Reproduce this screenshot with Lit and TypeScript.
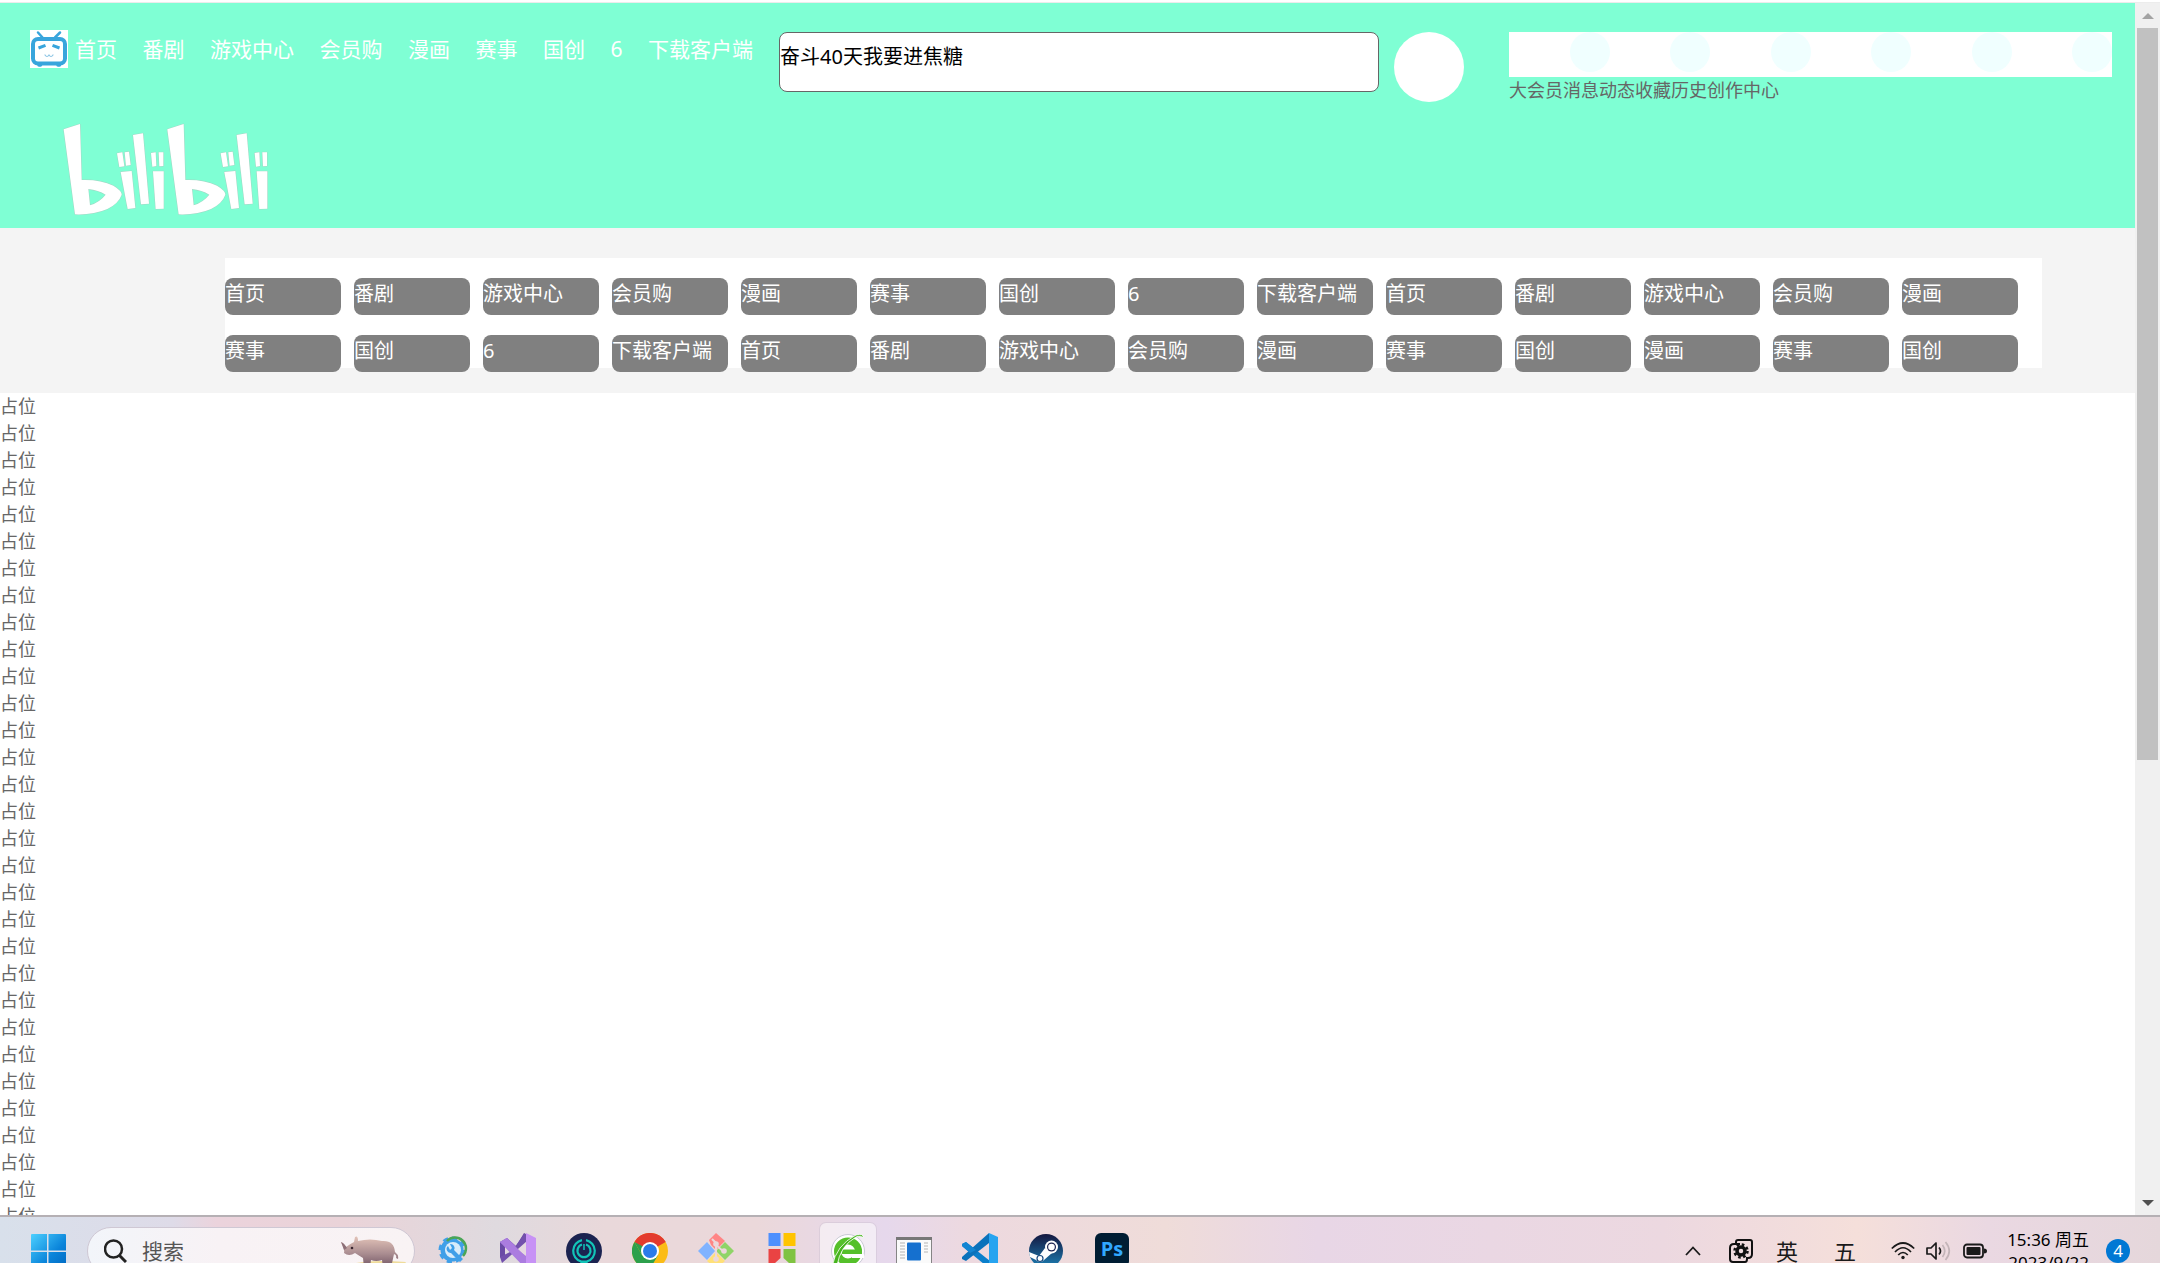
import { LitElement, html, svg, css } from "lit";
import { customElement } from "lit/decorators.js";

const NAV = ["首页", "番剧", "游戏中心", "会员购", "漫画", "赛事", "国创", "6", "下载客户端"];
const CHANNELS = [
  ...NAV, "首页", "番剧", "游戏中心", "会员购", "漫画",
  "赛事", "国创", "6", "下载客户端", "首页", "番剧", "游戏中心",
  "会员购", "漫画", "赛事", "国创", "漫画", "赛事", "国创",
];
const TOOLS = ["大会员", "消息", "动态", "收藏", "历史", "创作中心"];
const FILLER = Array.from({ length: 31 }, () => "占位");

const FONT = css`"Noto Sans", "Noto Sans CJK SC", sans-serif`;

const halfLogo = svg`
  <path fill-rule="evenodd" d="M191 388L240 372L245 540Q300 538 340 557Q365 572 365 584Q356 610 322 627Q280 645 225 643ZM265 567L270 616Q300 606 317 584Q295 570 265 567Z"/>
  <path d="M351 460L367 457L373 499L358 501ZM374 457L387 455L392 495L378 497Z"/>
  <path d="M362 516L395 513L406 624L383 627Z"/>
  <path d="M399 405L429 400L447 611L423 613Z"/>
  <path d="M453 459L467 457L469 498L457 500ZM476 457L490 457L490 498L478 499Z"/>
  <path d="M459 514L491 514L491 626L467 627Z"/>`;

@customElement("site-header")
export class SiteHeader extends LitElement {
  static styles = css`
    :host { display: block; background: #7fffd4; font-family: ${FONT}; padding: 27px 23px 13px 30px; }
    .row { display: flex; align-items: flex-start; }
    .tv { flex: none; width: 38px; height: 38px; display: block; margin-right: 7px; }
    nav { flex: 0 1 678px; display: flex; justify-content: space-between; }
    nav a { color: #fff; text-decoration: none; font-size: 21px; line-height: 38px; white-space: nowrap; }
    .tools { flex: 1 1 0; display: flex; align-items: flex-start; margin: 2px 0 0 26px; min-width: 0; }
    input {
      flex: 1 1 600px; min-width: 0; box-sizing: border-box; height: 60px; margin: 0;
      padding: 0 0 14px 0; border: 1px solid #666; border-radius: 8px; background: #fff;
      color: #000; font-family: ${FONT}; font-size: 20px; outline: none;
    }
    .avatar { flex: none; width: 70px; height: 70px; border: 0; padding: 0; border-radius: 50%; background: #fff; margin: 0 45px 0 15px; }
    .panel { flex: 0 1 603px; color: #666; font-size: 18px; line-height: 27px; }
    .dots { display: grid; grid-template-columns: repeat(6, 1fr); justify-items: end; height: 45px; background: #fff; }
    .dot { width: 40px; height: 40px; border-radius: 50%; background: #f0ffff; }
    .labels { display: flex; }
    .labels a { color: inherit; text-decoration: none; white-space: nowrap; }
    .logo { display: block; width: 207px; height: 92px; margin: 19px 0 0 32px; }
  `;
  render() {
    return html`
      <div class="row">
        <svg class="tv" viewBox="0 0 38 38" aria-hidden="true">
          <rect width="38" height="38" fill="#fff"/>
          <g fill="none" stroke="#38a5dc" stroke-linecap="round">
            <path stroke-width="2.5" d="M8 2.500L12.500 7.500M30 2.500L25 7.500"/>
            <rect x="3" y="9" width="32" height="24.500" rx="5" stroke-width="4"/>
            <path stroke-width="3.500" d="M9 35h1.500M28 35h1.500"/>
            <path stroke-width="3" stroke-linecap="butt" d="M8.500 18l7-2.600M22.500 15.400l7 2.600"/>
            <path stroke-width="1.200" stroke="#8bc4e4" d="M15 25q2 3 4 0q2 3 4 0"/>
          </g>
        </svg>
        <nav>${NAV.map((t) => html`<a href="#">${t}</a>`)}</nav>
        <div class="tools">
          <input type="text" aria-label="搜索" .value=${"奋斗40天我要进焦糖"} />
          <button class="avatar" aria-label="头像"></button>
          <div class="panel">
            <div class="dots">${TOOLS.map(() => html`<span class="dot"></span>`)}</div>
            <div class="labels">${TOOLS.map((t) => html`<a href="#">${t}</a>`)}</div>
          </div>
        </div>
      </div>
      <svg class="logo" viewBox="186 369 621 276" role="img" aria-label="bilibili" fill="#fff"
        stroke="#a5d5c4" stroke-width="3" paint-order="stroke">
        <g>${halfLogo}</g><g transform="translate(311 0)">${halfLogo}</g>
      </svg>`;
  }
}

@customElement("channel-list")
export class ChannelList extends LitElement {
  static styles = css`
    :host { display: block; background: #f4f4f4; padding: 30px 93px 25px 225px; font-family: ${FONT}; }
    .box { height: 90px; background: #fff; padding: 20px 24px 0 0; display: grid;
      grid-template-columns: repeat(14, 1fr); grid-auto-rows: 37px; gap: 20px 13px; align-content: start; }
    a { display: block; background: #808080; border-radius: 8px; color: #fff; text-decoration: none;
      font-size: 20px; line-height: 31px; white-space: nowrap; }
  `;
  render() {
    return html`<div class="box">${CHANNELS.map((t) => html`<a href="#">${t}</a>`)}</div>`;
  }
}

@customElement("scroll-rail")
export class ScrollRail extends LitElement {
  static styles = css`
    :host { display: flex; flex-direction: column; flex: none; width: 25px; background: #f0f0f0; }
    button { flex: none; height: 25px; padding: 0; border: 0; background: none; display: grid; place-items: center; }
    svg { width: 12px; height: 6px; display: block; }
    .track { flex: 1; padding: 0 2px; }
    .thumb { height: 63%; background: #c1c1c1; }
  `;
  render() {
    return html`
      <button aria-label="向上滚动"><svg viewBox="0 0 12 6"><path d="M0 6L6 0L12 6Z" fill="#a3a3a3"/></svg></button>
      <div class="track"><div class="thumb"></div></div>
      <button aria-label="向下滚动"><svg viewBox="0 0 12 6"><path d="M0 0L6 6L12 0Z" fill="#505050"/></svg></button>`;
  }
}

const APPS = [
  { name: "设置工具", art: svg`
    <circle cx="18" cy="17" r="9" fill="none" stroke="#3f9fe8" stroke-width="5"/>
    <circle cx="18" cy="17" r="11.500" fill="none" stroke="#3f9fe8" stroke-width="4" stroke-dasharray="5 4"/>
    <circle cx="19" cy="17" r="8" fill="#d8ecfa"/>
    <path d="M13 8a10 10 0 0 1 16 15" fill="none" stroke="#4aa556" stroke-width="2.500"/>
    <path d="M14 13a4 4 0 0 0 3 7l9 9l3-3l-9-9a4 4 0 0 0-4-6l2 4l-2 2Z" fill="#3f9fe8"/>` },
  { name: "Visual Studio", art: svg`
    <path d="M0 9L7 5L16 13L24 0L27 2V34L8 17L5 20V27L0 24Z" fill="#6b4aa6"/>
    <path d="M5 13V21L9 17Z" fill="#e5d8e0"/>
    <path d="M0 9L7 5L30 27L27 36L7 15Z" fill="#a878dd"/>
    <path d="M17 16L27 5V24Z" fill="#e5d8e0"/>
    <path d="M12 18L25 0L27 8L2 30L0 24Z" fill="#7350ad"/>
    <path d="M0 9L7 5L30 28L26 36Z" fill="#ab7ce0"/>
    <path d="M26 0L36 5V32L26 36Z" fill="#c792f5"/>` },
  { name: "安全中心", art: svg`
    <circle cx="18" cy="18" r="18" fill="#1b2350"/>
    <g fill="none" stroke="#12c4b8" stroke-width="2.200">
      <path d="M16 7.200A11 11 0 0 0 15 28.500M20 7.200A11 11 0 0 1 21 28.500"/>
      <path d="M16 11.500A6.500 6.500 0 1 0 20 11.500"/><path d="M18 11v6" stroke-width="1.500"/>
      <path d="M15 28.500h6l-3 4z" fill="#12c4b8"/>
    </g>` },
  { name: "Chrome", art: svg`
    <circle cx="18" cy="18" r="18" fill="#fbbc16"/>
    <path d="M18 18L2.400 9A18 18 0 0 1 33.600 9Z" fill="#e33b2e"/>
    <path d="M2.400 9A18 18 0 0 0 18 36L25.800 22.500L18 18L10.200 22.500Z" fill="#2da04c"/>
    <path d="M3 8.500A18 18 0 0 1 33.600 9H18L10 20Z" fill="#e33b2e"/>
    <path d="M2.400 9L10.200 22.500L14 15Z" fill="#2da04c"/>
    <circle cx="18" cy="18" r="9" fill="#fff"/><circle cx="18" cy="18" r="7" fill="#2a7bea"/>` },
  { name: "Git", art: svg`
    <path d="M18 0L27 8L18 17L13 12L11 7Z" fill="#ff8585"/>
    <path d="M9 9L17 18L9 27L0 18Z" fill="#80b3ff"/>
    <path d="M27 9L36 18L27 27L18 18Z" fill="#8fd467"/>
    <path d="M18 19L27 28L18 36L9 28Z" fill="#ffe078"/>
    <path d="M14 6L18 10V27M18 12L26 19" fill="none" stroke="#ebd8db" stroke-width="2"/>
    <g fill="#ebd8db"><circle cx="18" cy="11" r="2.800"/><circle cx="26" cy="18" r="2.800"/><circle cx="18" cy="26" r="2.800"/></g>` },
  { name: "应用商店", art: svg`
    <path d="M4.500 0H16.500V13H4.500Z" fill="#4d90fe"/><path d="M19.500 0H31.500V13H19.500Z" fill="#ffc400"/>
    <path d="M4.500 16H16.500V25L4.500 36Z" fill="#ea4343"/><path d="M19.500 16H31.500V36L19.500 25Z" fill="#80c342"/>` },
  { name: "浏览器", active: true, art: svg`
    <circle cx="18" cy="18" r="16.500" fill="#fff" stroke="#c9c9d4" stroke-width="1"/>
    <circle cx="18" cy="18.500" r="10.500" fill="none" stroke="#55c02a" stroke-width="7"/>
    <path d="M12 16.500H32V21H12Z" fill="#55c02a"/><path d="M22 21H34V25H22Z" fill="#fff"/>
    <path d="M2 34Q6 12 26 2Q34 0 33 5Q31 2 26 4Q10 13 7 33Z" fill="#47b41e" stroke="#fff" stroke-width=".8"/>` },
  { name: "窗口", art: svg`
    <rect x=".5" y="4.500" width="35" height="32" fill="#fafafa" stroke="#858585"/>
    <path d="M0 4H36V7H0Z" fill="#777"/><rect x="11" y="9.500" width="14" height="18" rx="1" fill="#1570cf"/>
    <path d="M4 10h5M4 13h5M4 16h5M4 19h5M4 22h5M4 25h5M28 10h4M28 13h4M28 16h4M28 19h4" stroke="#ccc" stroke-width="1.500"/>` },
  { name: "VS Code", art: svg`
    <path d="M0 11L4 9L28 28V36L0 13Z" fill="#0b7fcb"/>
    <path d="M0 24L27 0V10L4 28L0 26Z" fill="#0a72bb"/>
    <path d="M0 11L4 9L14 17L8 20L0 13Z" fill="#1285d2"/>
    <path d="M27 0L36 4V32L27 36Z" fill="#27a4f0"/>` },
  { name: "Steam", art: svg`
    <defs><linearGradient id="st" x1="0" y1="0" x2="0" y2="1"><stop offset="0" stop-color="#14173f"/><stop offset="1" stop-color="#1c7fb4"/></linearGradient></defs>
    <circle cx="18" cy="18" r="17" fill="url(#st)"/>
    <path d="M1 19L11 23L17 15L24 20L16 27A5 5 0 0 1 8 27L2 24Z" fill="#fff"/>
    <circle cx="23.500" cy="14" r="6.500" fill="#fff"/><circle cx="23.500" cy="14" r="4.500" fill="#1a2350"/><circle cx="23.500" cy="14" r="3.300" fill="#fff"/>
    <circle cx="12" cy="25.500" r="3" fill="none" stroke="#1b4b80" stroke-width="1.200"/>` },
  { name: "Photoshop", art: svg`
    <rect x="1" y="0" width="34" height="34" rx="6" fill="#001d33"/>
    <text x="18" y="23" text-anchor="middle" font-family="Open Sans, sans-serif" font-weight="700" font-size="20" fill="#31a8ff">Ps</text>` },
];

@customElement("task-bar")
export class TaskBar extends LitElement {
  static styles = css`
    :host {
      display: block; flex: none; height: 46px; overflow: hidden; border-top: 2px solid #b5b0b4; font-family: ${FONT};
      background: linear-gradient(90deg, #d8e0eb 0, #dedbe8 8%, #ebd3dc 10%, #ead3d8 16%, #dfdadf 23%, #e9d8da 28%,
        #ebd8da 35%, #e6d8ec 41%, #edd9df 45%, #efdcd9 54%, #e8d6e6 61%, #ecd8e0 77%, #f5dfda 86%, #ead8e2 92%, #e5d7db 100%);
    }
    .bar { height: 68px; display: flex; align-items: center; padding: 0 30px; }
    button { border: 0; padding: 0; margin: 0; background: none; display: grid; place-items: center; }
    svg { display: block; }
    .start { flex: none; width: 36px; height: 36px; margin-right: 21px; }
    .search { flex: none; box-sizing: border-box; display: flex; align-items: center; width: 328px; height: 48px; padding: 0 6px 0 16px;
      border: 1px solid #cfc8d4; border-radius: 24px; background: linear-gradient(90deg, #f2f5fa, #f8f2f5 40%, #f9f3f4); }
    .search input { flex: 1; min-width: 0; border: 0; outline: 0; background: none; margin-left: 15px; padding: 0;
      font-family: ${FONT}; font-size: 21px; line-height: 30px; color: #555; }
    .search input::placeholder { color: #555; opacity: 1; }
    .apps { display: flex; margin-left: 4px; }
    .app { width: 66px; height: 56px; }
    .tile { width: 56px; height: 56px; display: grid; place-items: center; border-radius: 6px; }
    .tile.active { background: rgba(255, 255, 255, .5); box-shadow: 0 0 0 1px rgba(200, 190, 205, .4); }
    .tray { display: flex; align-items: center; margin-left: auto; color: #1a1a1a; }
    .chevron { width: 16px; margin-right: 28px; }
    .ime { width: 24px; margin-right: 22px; }
    .lang { width: 24px; font-family: ${FONT}; font-size: 22px; line-height: 30px; color: #1a1a1a; margin-right: 34px; }
    .status { display: flex; align-items: center; gap: 11px; margin-right: 20px; }
    time { text-align: right; font-size: 17px; line-height: 23px; color: #000; margin-right: 17px; white-space: nowrap; }
    .badge { width: 24px; height: 24px; border-radius: 50%; background: #0078d4; color: #fff; font-family: ${FONT}; font-size: 17px; line-height: 24px; }
  `;
  render() {
    return html`<div class="bar">
      <button class="start" aria-label="开始">
        <svg width="36" height="36" viewBox="0 0 36 36">
          <defs><linearGradient id="w" x1="0" y1="0" x2="1" y2="1"><stop offset="0" stop-color="#4cd0ff"/><stop offset=".6" stop-color="#0a84da"/><stop offset="1" stop-color="#0067c0"/></linearGradient></defs>
          <path d="M2 1H17V17.500H1V2Q1 1 2 1ZM18.500 1H35Q36 1 36 2V17.500H18.500ZM1 19H17V36H1ZM18.500 19H36V36H18.500Z" fill="url(#w)"/>
        </svg>
      </button>
      <label class="search">
        <svg width="23" height="24" viewBox="0 0 23 24"><circle cx="9.500" cy="10" r="8.500" fill="none" stroke="#222" stroke-width="2.500"/><path d="M15.500 16.500L22 23" stroke="#222" stroke-width="3"/></svg>
        <input type="text" aria-label="搜索" placeholder="搜索" />
        <svg width="68" height="34" viewBox="0 0 68 34">
          <defs><linearGradient id="r" x1="0" y1="0" x2="0" y2="1"><stop offset="0" stop-color="#e3c3b8"/><stop offset=".55" stop-color="#a98c90"/><stop offset="1" stop-color="#6f5362"/></linearGradient></defs>
          <path d="M12 30Q30 25 66 28L62 34H10Z" fill="#efdc9a"/>
          <path d="M1 8Q4 9 6 13Q10 10 14 8L15 3Q18 1 18 7Q30 4 42 7Q54 6 55 18Q59 21 58 25L56 24Q57 21 54 20L51 34H43L42 26Q36 28 31 26L30 34H24L23 24Q18 21 15 19Q9 23 4 19Q5 15 1 8Z" fill="url(#r)"/>
          <circle cx="12" cy="14" r="1.300" fill="#3a2630"/><path d="M1 8Q4 9 7 14L4 16Z" fill="#8d7078"/>
        </svg>
      </label>
      <div class="apps">${APPS.map((a) => html`<button class="app" aria-label=${a.name}>
        <span class="tile ${a.active ? "active" : ""}"><svg width="36" height="36" viewBox="0 0 36 36">${a.art}</svg></span></button>`)}</div>
      <div class="tray">
        <button class="chevron" aria-label="显示隐藏的图标"><svg width="16" height="10" viewBox="0 0 16 10"><path d="M1 9L8 1.500L15 9" fill="none" stroke="#1a1a1a" stroke-width="1.800"/></svg></button>
        <button class="ime" aria-label="输入法设置"><svg width="24" height="24" viewBox="0 0 24 24" fill="none" stroke="#111" stroke-width="2">
          <path d="M7 4V3Q7 1 9 1H21Q23 1 23 3V15Q23 19 19 19"/><path d="M5 5Q1 5 1 9V20Q1 23 4 23H16Q18 23 18 20"/><path d="M5 5H11M19 19H17"/>
          <circle cx="12" cy="12" r="4" stroke-width="3.500"/><circle cx="12" cy="12" r="6.500" stroke-width="2.500" stroke-dasharray="2.600 2.500"/></svg></button>
        <button class="lang" aria-label="英">英</button>
        <button class="lang" aria-label="五">五</button>
        <div class="status">
          <svg width="24" height="18" viewBox="0 0 24 18" fill="none" stroke="#1a1a1a" stroke-width="1.700"><path d="M.8 6.500Q12-4.500 23.200 6.500M4 10Q12 1.500 20 10M7.200 13Q12 8 16.800 13"/><circle cx="12" cy="15.500" r="1.700" fill="#1a1a1a" stroke="none"/></svg>
          <svg width="26" height="20" viewBox="0 0 26 20" fill="none" stroke="#1a1a1a" stroke-width="1.700"><path d="M1 7H5L10 2V18L5 13H1Z" stroke-linejoin="round"/><path d="M13 6.500Q16 10 13 13.500"/><path d="M16.500 4Q21 10 16.500 16M19.500 1Q27 10 19.500 19" stroke="#c3b4b8"/></svg>
          <svg width="24" height="16" viewBox="0 0 24 16"><rect x="1" y="1.500" width="19" height="13" rx="3" fill="none" stroke="#1a1a1a" stroke-width="1.800"/><rect x="3.500" y="4" width="14" height="8" rx="1" fill="#1a1a1a"/><path d="M21 5.500Q24 5.500 24 8T21 10.500Z" fill="#1a1a1a"/></svg>
        </div>
        <time datetime="2023-09-22T15:36">15:36 周五<br />2023/9/22</time>
        <button class="badge" aria-label="4 条通知">4</button>
      </div>
    </div>`;
  }
}

@customElement("app-root")
export class AppRoot extends LitElement {
  static styles = css`
    :host { display: flex; flex-direction: column; height: 100vh; overflow: hidden; background: #fff; font-family: ${FONT}; }
    .window { flex: 1; min-height: 0; display: flex; margin-top: 2px; border-top: 1px solid #ececec; }
    main { flex: 1; min-width: 0; overflow: hidden; }
    p { margin: 0; font-size: 18px; line-height: 27px; color: #666; }
  `;
  render() {
    return html`
      <div class="window">
        <main>
          <site-header></site-header>
          <channel-list></channel-list>
          ${FILLER.map((t) => html`<p>${t}</p>`)}
        </main>
        <scroll-rail></scroll-rail>
      </div>
      <task-bar></task-bar>`;
  }
}
